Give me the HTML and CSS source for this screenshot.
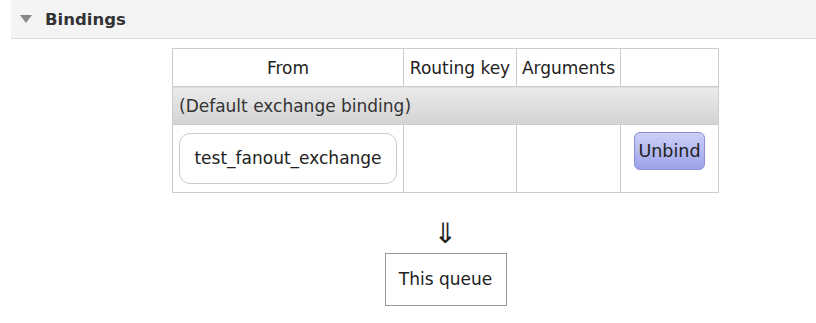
FILE: index.html
```html
<!DOCTYPE html>
<html lang="en">
<head>
    <meta charset="UTF-8">
    <title>Queue bindings</title>
    <link rel="stylesheet" href="styles.css">
</head>
<body>
    <div class="section-head">
        <span class="toggle"></span>
        <h2>Bindings</h2>
    </div>
    <div class="bindings">
        <table class="list">
            <thead>
                <tr>
                    <th class="col-from">From</th>
                    <th class="col-key">Routing key</th>
                    <th class="col-args">Arguments</th>
                    <th class="col-act"></th>
                </tr>
            </thead>
            <tbody>
                <tr class="default-row">
                    <td colspan="4">(Default exchange binding)</td>
                </tr>
                <tr>
                    <td><span class="exchange">test_fanout_exchange</span></td>
                    <td></td>
                    <td></td>
                    <td class="act"><button class="unbind">Unbind</button></td>
                </tr>
            </tbody>
        </table>
        <div class="arrow">&dArr;</div>
        <div class="this-queue">This queue</div>
    </div>
</body>
</html>
```

FILE: styles.css
```css
body {
    margin: 0;
    font-family: "DejaVu Sans", Verdana, sans-serif;
    font-size: 17px;
    color: #333;
    background: #fff;
}
.section-head {
    margin-left: 11px;
    height: 38px;
    background: #f4f4f4;
    border-bottom: 1px solid #dcdcdc;
    display: flex;
    align-items: center;
}
.toggle {
    width: 0;
    height: 0;
    margin-left: 9px;
    margin-right: 13px;
    border-left: 6px solid transparent;
    border-right: 6px solid transparent;
    border-top: 8px solid #888;
}
.section-head h2 {
    margin: 0;
    font-size: 16.5px;
    font-weight: bold;
    color: #333;
}
.bindings {
    width: 547px;
    margin-left: 172px;
    margin-top: 9px;
    display: flex;
    flex-direction: column;
    align-items: center;
}
.list {
    border-collapse: collapse;
    width: 547px;
    table-layout: fixed;
}
.list th, .list td {
    border: 1px solid #ccc;
    padding: 0 6px;
    white-space: nowrap;
}
.list th {
    font-weight: normal;
    height: 37px;
    padding: 0 2px;
    background: #fff;
    color: #222;
}
.col-from { width: 226px; }
.col-key { width: 108px; }
.col-args { width: 99px; }
.default-row td {
    height: 37px;
    text-align: left;
    background: linear-gradient(#ebebeb, #d3d3d3);
}
tbody tr:last-child td {
    height: 67px;
}
.exchange {
    display: block;
    height: 49px;
    line-height: 49px;
    text-align: center;
    border: 1px solid #ccc;
    border-radius: 11px;
    background: #fff;
    color: #222;
}
.act {
    text-align: center;
    vertical-align: top;
}
.unbind {
    margin-top: 7px;
    width: 71px;
    height: 38px;
    font-family: "DejaVu Sans", Verdana, sans-serif;
    font-size: 17.5px;
    color: #222;
    background: linear-gradient(#ccd0f6, #9da2ea);
    border: 1px solid #8a8fd4;
    border-radius: 6px;
    padding: 0;
}
.arrow {
    margin-top: 25px;
    font-size: 28px;
    line-height: 32px;
    color: #222;
}
.this-queue {
    margin-top: 3px;
    width: 120px;
    height: 51px;
    line-height: 51px;
    text-align: center;
    border: 1px solid #999;
    color: #222;
}
```
